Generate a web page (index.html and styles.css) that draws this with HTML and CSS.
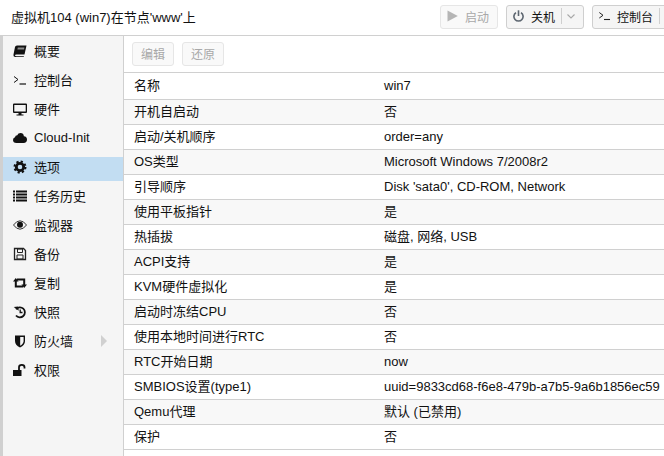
FILE: index.html
```html
<!DOCTYPE html>
<html lang="zh">
<head>
  <meta charset="UTF-8" />
  <title>虚拟机104 (win7)</title>
  <link rel="stylesheet" href="styles.css">
</head>
<body>

  <!-- HEADER -->
  <header class="top-bar">
    <span class="title">虚拟机104 (win7)在节点'www'上</span>
    <div class="top-tools">
      <div class="btn btn-off">
        <svg class="btn-icon" viewBox="0 0 11 12"><path d="M.5 .5 L10.8 6 L.5 11.5 Z" fill="#b5b5b5"/></svg>
        <span>启动</span>
      </div>
      <div class="btn">
        <svg class="btn-icon" viewBox="0 0 11 12"><path d="M3 2.6 A4.6 4.6 0 1 0 8 2.6" fill="none" stroke="#5d6670" stroke-width="1.6"/><path d="M5.5 .3 V6" stroke="#5d6670" stroke-width="1.6"/></svg>
        <span>关机</span>
        <span class="btn-split"><svg class="caret" viewBox="0 0 8 5"><path d="M.5 .5 L4 4 L7.5 .5" fill="none" stroke="#a8a8a8" stroke-width="1.1"/></svg></span>
      </div>
      <div class="btn">
        <svg class="btn-icon" viewBox="0 0 11 12"><path d="M.3 2.5 L4 5.3 L.3 8" fill="none" stroke="#222" stroke-width="1"/><path d="M5 9.5 H11" stroke="#222" stroke-width="1.1"/></svg>
        <span>控制台</span>
        <span class="btn-split"><svg class="caret" viewBox="0 0 8 5"><path d="M.5 .5 L4 4 L7.5 .5" fill="none" stroke="#a8a8a8" stroke-width="1.1"/></svg></span>
      </div>
    </div>
  </header>

  <div class="main">
    <!-- SIDEBAR -->
    <ul class="side-menu">
      <li>
        <svg class="icon" viewBox="0 0 14 14"><path d="M4 1.5 H13.5 L11.5 10.5 H3.5 Q1.8 10.5 2 11.5 Q2.2 12.3 3.5 12.3 H11 L10.7 13 H2.5 Q.2 13 .5 10.5 L2 3 Q2.3 1.5 4 1.5 Z" fill="#111"/><path d="M4.8 3.5 H11.4 L11 5.5 H4.4 Z" fill="#8a8a8a"/></svg>
        <span>概要</span>
      </li>
      <li>
        <svg class="icon" viewBox="0 0 14 14"><path d="M1 3.5 L5 6.5 L1 9.5" fill="none" stroke="#111" stroke-width="1"/><path d="M6.5 11 H13" stroke="#111" stroke-width="1.2"/></svg>
        <span>控制台</span>
      </li>
      <li>
        <svg class="icon" viewBox="0 0 14 14"><path d="M1 1.5 H13 Q14 1.5 14 2.5 V10 Q14 11 13 11 H8.5 V12.5 H10.5 V13.5 H3.5 V12.5 H5.5 V11 H1 Q0 11 0 10 V2.5 Q0 1.5 1 1.5 Z M1.3 3 V9.5 H12.7 V3 Z" fill="#111" fill-rule="evenodd"/></svg>
        <span>硬件</span>
      </li>
      <li>
        <svg class="icon" viewBox="0 0 14 14"><path d="M3.5 12 Q0 12 0 9 Q0 6.8 2 6.2 Q2.2 4.2 4.3 4.2 Q5 2 7.6 2 Q10.5 2 10.9 5.2 Q14 5.6 14 8.6 Q14 12 10.5 12 Z" fill="#111"/></svg>
        <span>Cloud-Init</span>
      </li>
      <li class="active">
        <svg class="icon" viewBox="0 0 14 14"><circle cx="7" cy="7" r="3.7" fill="none" stroke="#111" stroke-width="2.8"/><circle cx="7" cy="7" r="5.5" fill="none" stroke="#111" stroke-width="2" stroke-dasharray="2.2 2.12"/></svg>
        <span>选项</span>
      </li>
      <li>
        <svg class="icon" viewBox="0 0 14 14"><path d="M0 2.5 H2 M3 2.5 H14 M0 5.5 H2 M3 5.5 H14 M0 8.5 H2 M3 8.5 H14 M0 11.5 H2 M3 11.5 H14" stroke="#111" stroke-width="1.8"/></svg>
        <span>任务历史</span>
      </li>
      <li>
        <svg class="icon" viewBox="0 0 14 14"><path d="M.5 7 Q3.5 2.8 7 2.8 Q10.5 2.8 13.5 7 Q10.5 11.2 7 11.2 Q3.5 11.2 .5 7 Z" fill="none" stroke="#333" stroke-width="1"/><circle cx="7" cy="6.8" r="3" fill="#111"/></svg>
        <span>监视器</span>
      </li>
      <li>
        <svg class="icon" viewBox="0 0 14 14"><path d="M1.5 1.5 H10.5 L12.5 3.5 V12.5 H1.5 Z" fill="none" stroke="#222" stroke-width="1.3"/><path d="M4.5 2 H9.5 V5.5 H4.5 Z M4 8 H10 V12 H4 Z" fill="none" stroke="#222" stroke-width="1"/></svg>
        <span>备份</span>
      </li>
      <li>
        <svg class="icon" viewBox="0 0 14 14"><path d="M2.8 5 V10.5 H10" fill="none" stroke="#111" stroke-width="2"/><path d="M0 5.5 L2.8 2 L5.6 5.5 Z M8.4 8.5 L14 8.5 L11.2 12 Z" fill="#111"/><path d="M4 3.5 H11.2 V9" fill="none" stroke="#111" stroke-width="2"/></svg>
        <span>复制</span>
      </li>
      <li>
        <svg class="icon" viewBox="0 0 14 14"><path d="M3 4.2 A5 5 0 1 1 3 10.5" fill="none" stroke="#111" stroke-width="1.8"/><path d="M1 1.8 L5.5 1.8 L5.5 6 Z" fill="#111" transform="rotate(-8 3 4)"/><path d="M7.2 4.5 V7.5 H9.5" fill="none" stroke="#111" stroke-width="1.3"/></svg>
        <span>快照</span>
      </li>
      <li class="has-sub">
        <svg class="icon" viewBox="0 0 14 14"><path d="M2 1.5 H12 V7 Q12 11 7 13.5 Q2 11 2 7 Z" fill="#111"/><path d="M7.2 3 H10.6 V7 Q10.6 9.8 7.2 11.8 Z" fill="#f5f5f5"/></svg>
        <span>防火墙</span>
        <i class="sub-arrow"></i>
      </li>
      <li>
        <svg class="icon" viewBox="0 0 14 14"><path d="M0 7 H8.5 V13 H0 Z" fill="#111"/><path d="M6 7 V4.2 Q6 1.8 8.8 1.8 Q11.5 1.8 11.5 4.2 V5.5" fill="none" stroke="#111" stroke-width="1.8"/></svg>
        <span>权限</span>
      </li>
    </ul>

    <!-- ISI OPSI -->
    <section class="content">
      <div class="toolbar">
        <div class="btn btn-off">编辑</div>
        <div class="btn btn-off">还原</div>
      </div>
      <table class="options">
        <tr><td>名称</td><td>win7</td></tr>
        <tr><td>开机自启动</td><td class="zh">否</td></tr>
        <tr><td>启动/关机顺序</td><td>order=any</td></tr>
        <tr><td>OS类型</td><td>Microsoft Windows 7/2008r2</td></tr>
        <tr><td>引导顺序</td><td>Disk 'sata0', CD-ROM, Network</td></tr>
        <tr><td>使用平板指针</td><td class="zh">是</td></tr>
        <tr><td>热插拔</td><td class="zh">磁盘, 网络, USB</td></tr>
        <tr><td>ACPI支持</td><td class="zh">是</td></tr>
        <tr><td>KVM硬件虚拟化</td><td class="zh">是</td></tr>
        <tr><td>启动时冻结CPU</td><td class="zh">否</td></tr>
        <tr><td>使用本地时间进行RTC</td><td class="zh">否</td></tr>
        <tr><td>RTC开始日期</td><td>now</td></tr>
        <tr><td>SMBIOS设置(type1)</td><td>uuid=9833cd68-f6e8-479b-a7b5-9a6b1856ec59</td></tr>
        <tr><td>Qemu代理</td><td class="zh">默认 (已禁用)</td></tr>
        <tr><td>保护</td><td class="zh">否</td></tr>
      </table>
    </section>
  </div>

</body>
</html>
```

FILE: styles.css
```css
* {
  box-sizing: border-box;
}

html, body {
  height: 100%;
}

body {
  margin: 0;
  font-family: "Liberation Sans", "Noto Sans CJK SC", sans-serif;
  font-size: 13px;
  color: #111;
  background: #fff;
  overflow: hidden;
  display: flex;
  flex-direction: column;
}

/* === HEADER === */
.top-bar {
  flex: none;
  height: 36px;
  display: flex;
  align-items: center;
  padding-left: 11px;
  border-bottom: 1px solid #d0d0d0;
}

.title {
  flex: none;
  width: 429px;
  padding-bottom: 2px;
}

.top-tools {
  flex: none;
  display: flex;
  gap: 8px;
  margin-top: -1px;
}

/* === BUTTONS === */
.btn {
  flex: none;
  height: 24px;
  display: flex;
  align-items: center;
  padding: 0 8px 2px;
  font-size: 12px;
  color: #111;
  background: #f5f5f5;
  border: 1px solid #cfcfcf;
  border-radius: 3px;
}

.top-tools .btn {
  padding-left: 6px;
}

.btn-off {
  color: #a8a8a8;
  background: #f9f9f9;
  border-color: #e6e6e6;
}

.btn-icon {
  width: 11px;
  height: 12px;
  margin-right: 7px;
}

.btn-split {
  display: flex;
  align-items: center;
  height: 16px;
  margin-left: 6px;
  padding-left: 5px;
  border-left: 1px solid #cfcfcf;
}

.caret {
  width: 8px;
  height: 5px;
}

/* === LAYOUT === */
.main {
  flex: 1;
  display: flex;
  min-height: 0;
  border-left: 3px solid #d0d0d0;
}

/* === SIDEBAR === */
.side-menu {
  flex: none;
  width: 121px;
  margin: 0;
  padding: 5px 0 0;
  list-style: none;
  display: flex;
  flex-direction: column;
  gap: 5px;
  background: #f5f5f5;
  border-right: 1px solid #d0d0d0;
}

.side-menu li {
  height: 24px;
  display: flex;
  align-items: center;
  gap: 7px;
  padding: 0 0 5px 10px;
}

.side-menu li.active {
  background: #c2ddf2;
}

.icon {
  flex: none;
  width: 14px;
  height: 14px;
}

.sub-arrow {
  margin-left: 21px;
  border-left: 6px solid #d0d0d0;
  border-top: 6px solid transparent;
  border-bottom: 6px solid transparent;
}

/* === CONTENT === */
.content {
  flex: 1;
  min-width: 0;
}

.toolbar {
  height: 37px;
  display: flex;
  align-items: center;
  gap: 8px;
  padding-left: 8px;
  border-bottom: 1px solid #d0d0d0;
}

.options {
  width: 100%;
  table-layout: fixed;
  border-collapse: collapse;
}

.options td {
  height: 25px;
  padding: 0 0 0 10px;
  white-space: nowrap;
  border-bottom: 1px solid #d0d0d0;
}

.options td:first-child {
  width: 250px;
  padding-bottom: 2px;
}

.options td.zh {
  padding-bottom: 2px;
}

.options tr:first-child td {
  height: 26px;
}

.options tr:nth-child(even) {
  background: #f8f8f8;
}
```
